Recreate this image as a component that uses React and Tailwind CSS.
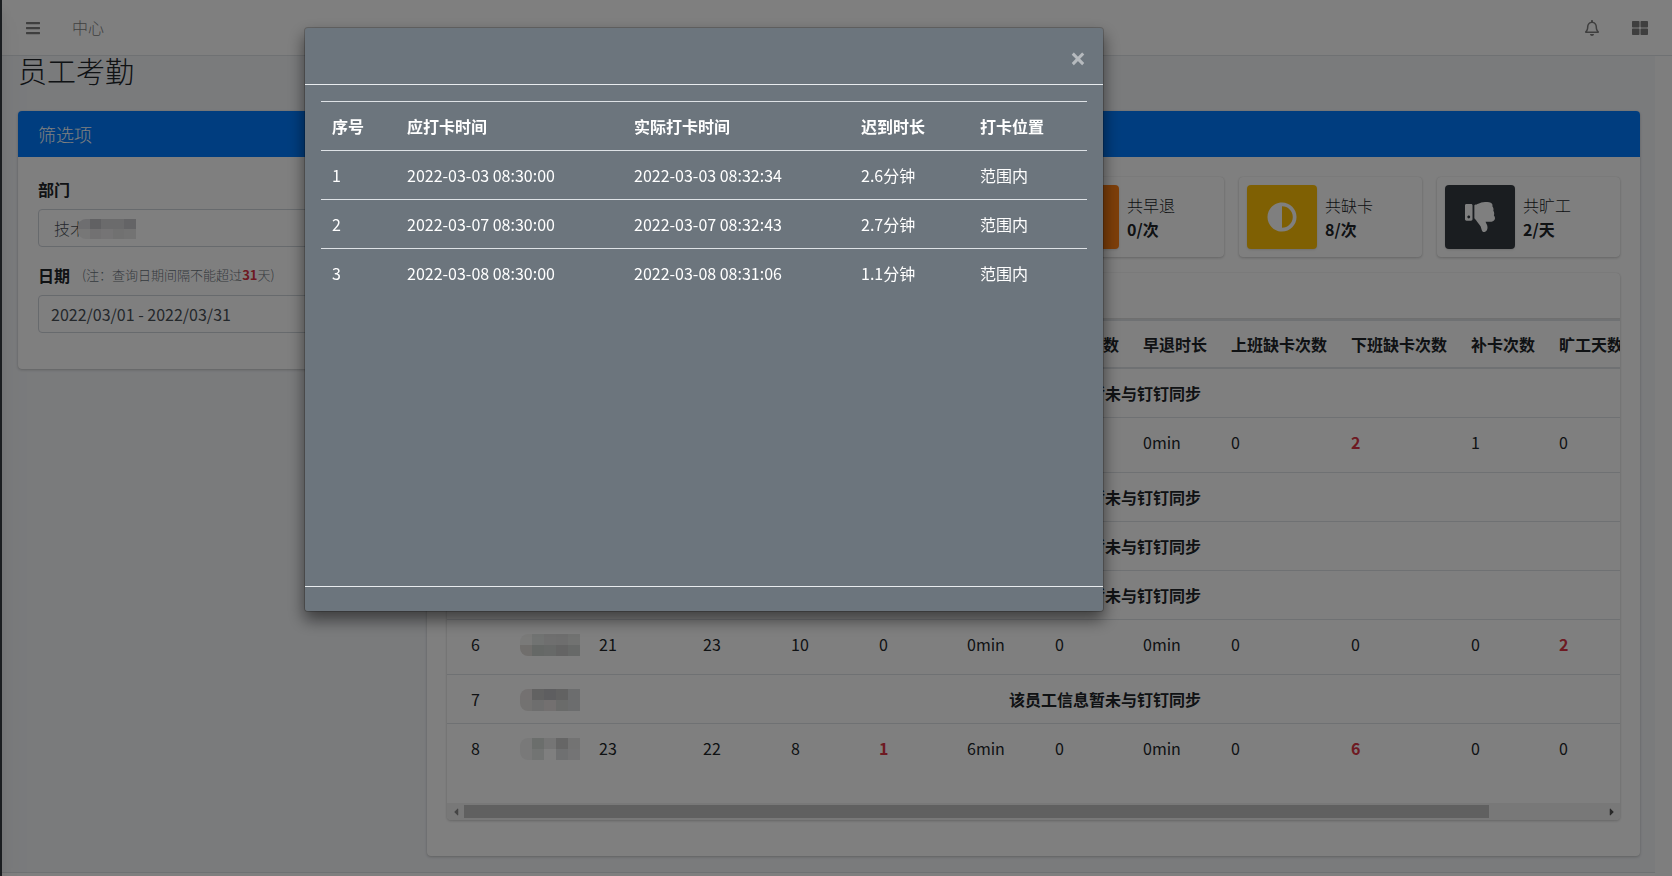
import React, { useState } from "react";
import { FaBars, FaThLarge, FaAdjust, FaThumbsDown, FaRegBell, FaCaretLeft, FaCaretRight } from "react-icons/fa";

const infoBoxes = [
  { label: "共早退", value: "0/次", color: "bg-[#fd7e14]", start: "col-start-4" },
  { label: "共缺卡", value: "8/次", color: "bg-[#ffc107]", icon: FaAdjust },
  { label: "共旷工", value: "2/天", color: "bg-[#343a40]", icon: FaThumbsDown },
];

const columns = [
  { title: "序号", width: "w-[61px]" },
  { title: "姓名", width: "w-[79px]" },
  { title: "应出勤天数", width: "w-[104px]" },
  { title: "出勤天数", width: "w-[88px]" },
  { title: "休息天数", width: "w-[88px]" },
  { title: "迟到次数", width: "w-[88px]" },
  { title: "迟到时长", width: "w-[88px]" },
  { title: "早退次数", width: "w-[88px]" },
  { title: "早退时长", width: "w-[88px]" },
  { title: "上班缺卡次数", width: "w-[120px]" },
  { title: "下班缺卡次数", width: "w-[120px]" },
  { title: "补卡次数", width: "w-[88px]" },
  { title: "旷工天数", width: "w-[88px]" },
  { title: "", width: "w-[116px]" },
];

const maskA = [
  "bg-[#f4f4f2]", "bg-[#e2e6e4]", "bg-[#dedede]", "bg-[#dcdcdc]", "bg-[#e2e4e3]",
  "bg-[#e0dcd8]", "bg-[#cad0cd]", "bg-[#ced2d0]", "bg-[#c8c8c8]", "bg-[#cfd3d1]",
];
const maskB = [
  "bg-[#e8e2e2]", "bg-[#c4c4c4]", "bg-[#bcbcc0]", "bg-[#c4c4c4]", "bg-[#d8dadd]",
  "bg-[#e6e5e2]", "bg-[#dcdddc]", "bg-[#e6e0e0]", "bg-[#d4d7d5]", "bg-[#d8dadd]",
];
const maskC = [
  "bg-[#f2f3f3]", "bg-[#d6dcd9]", "bg-[#eaeaea]", "bg-[#cdcdcd]", "bg-[#e6e6e6]",
  "bg-[#f2f3f3]", "bg-[#e4e8e6]", "bg-white", "bg-[#dfe0e3]", "bg-[#e9e9ea]",
];
const maskDept = [
  "bg-[#dddce0]", "bg-[#c2c2c6]", "bg-[#d6d6d8]", "bg-[#d6d6d8]", "bg-[#c9c9cc]",
  "bg-[#eeeeef]", "bg-[#e4e3e5]", "bg-[#eae9ea]", "bg-[#e2e2e3]", "bg-[#e6e6e6]",
];

// rows without values are employees that are not synced yet
const staff = [
  { id: 1, mask: maskB },
  { id: 2, mask: maskA, values: ["23", "23", "8", "0", "0min", "0", "0min", "0", "2", "1", "0"], red: [8] },
  { id: 3, mask: maskB },
  { id: 4, mask: maskB },
  { id: 5, mask: maskB },
  { id: 6, mask: maskA, values: ["21", "23", "10", "0", "0min", "0", "0min", "0", "0", "0", "2"], red: [10] },
  { id: 7, mask: maskB },
  { id: 8, mask: maskC, values: ["23", "22", "8", "1", "6min", "0", "0min", "0", "6", "0", "0"], red: [3, 8] },
];

const lateRecords = [
  { id: 1, plan: "2022-03-03 08:30:00", real: "2022-03-03 08:32:34", late: "2.6分钟", place: "范围内" },
  { id: 2, plan: "2022-03-07 08:30:00", real: "2022-03-07 08:32:43", late: "2.7分钟", place: "范围内" },
  { id: 3, plan: "2022-03-08 08:30:00", real: "2022-03-08 08:31:06", late: "1.1分钟", place: "范围内" },
];

const card = "rounded bg-white shadow-[0_0_1px_rgba(0,0,0,.125),0_1px_3px_rgba(0,0,0,.2)]";

function Mask({ tiles, className }) {
  return (
    <div className={`grid grid-cols-5 overflow-hidden rounded-l-lg ${className}`}>
      {tiles.map((tile, i) => <span key={i} className={tile} />)}
    </div>
  );
}

function TopBar() {
  return (
    <header className="flex h-14 items-center border-b border-[#dee2e6] bg-white pr-6 pl-[23px] text-[#7f7f7f]">
      <button type="button" aria-label="菜单">
        <FaBars size={16} />
      </button>
      <a href="#" className="ml-[31px] pb-0.5 font-light">中心</a>
      <div className="ml-auto flex items-center gap-8">
        <button type="button" aria-label="通知">
          <FaRegBell size={16} />
        </button>
        <button type="button" aria-label="应用">
          <FaThLarge size={16} />
        </button>
      </div>
    </header>
  );
}

function FilterCard() {
  return (
    <section className={`w-[394px] shrink-0 ${card}`}>
      <h3 className="flex h-[46px] items-center rounded-t bg-[#007bff] px-5 text-lg font-light text-white">筛选项</h3>
      <form className="p-5">
        <label htmlFor="dept" className="mb-2 block font-bold">部门</label>
        <div className="relative mb-4">
          <input
            id="dept"
            defaultValue="技术"
            className="h-[38px] w-full rounded border border-[#ced4da] px-[15px] font-light text-[#495057]"
          />
          <Mask tiles={maskDept} className="absolute top-2.5 left-10 h-5 w-[58px]" />
        </div>
        <div className="mb-2 flex items-center">
          <label htmlFor="range" className="font-bold">日期</label>
          <small className="ml-3 text-[13px] leading-6 font-light text-[#6c757d]">
            (注：查询日期间隔不能超过<b className="font-bold text-[#dc3545]">31</b>天)
          </small>
        </div>
        <input
          id="range"
          defaultValue="2022/03/01 - 2022/03/31"
          className="mb-4 block h-[38px] w-full rounded border border-[#ced4da] px-3 text-[#495057]"
        />
      </form>
    </section>
  );
}

function InfoBox({ box }) {
  const Icon = box.icon;
  return (
    <div className={`flex h-20 p-2 ${card} ${box.start || ""}`}>
      <div className={`flex w-[70px] items-center justify-center rounded text-white shadow ${box.color}`}>
        {Icon && <Icon size={30} />}
      </div>
      <div className="flex flex-col justify-center px-2 leading-6">
        <span className="font-light">{box.label}</span>
        <b>{box.value}</b>
      </div>
    </div>
  );
}

function StaffRow({ row }) {
  return (
    <tr className={`border-t border-[#dee2e6] align-top ${row.values ? "h-[55px]" : "h-[49px]"}`}>
      <td className="pt-3 pl-6">{row.id}</td>
      <td className="px-3 pt-3.5">
        <Mask tiles={row.mask} className="h-[22px] w-[60px]" />
      </td>
      {row.values ? (
        row.values.map((value, i) => (
          <td key={i} className={row.red.includes(i) ? "px-3 pt-3 font-bold text-[#dc3545]" : "px-3 pt-3"}>
            {value}
          </td>
        ))
      ) : (
        <td colSpan={11} className="pt-3 pr-6 pl-3 text-center font-bold">该员工信息暂未与钉钉同步</td>
      )}
    </tr>
  );
}

function AttendanceCard() {
  return (
    <section className={`min-w-0 flex-1 ${card}`}>
      <div className="h-[46px] rounded-t bg-[#007bff]" />
      <div className="px-5 pt-5 pb-9">
        <div className="grid grid-cols-6 gap-[15px]">
          {infoBoxes.map((box) => <InfoBox key={box.label} box={box} />)}
        </div>
        <div className={`mt-4 overflow-hidden ${card}`}>
          <div className="h-[46px] border-b border-[#dfdfdf]" />
          <div className="overflow-hidden pb-[25px]">
            <table className="w-[1304px] table-fixed border-collapse text-left">
              <thead>
                <tr className="h-12 border-y-2 border-[#dee2e6]">
                  {columns.map((col, i) => (
                    <th key={i} className={`whitespace-nowrap ${i === 0 ? "pl-6" : "px-3"} ${col.width}`}>
                      {col.title}
                    </th>
                  ))}
                </tr>
              </thead>
              <tbody>
                {staff.map((row) => <StaffRow key={row.id} row={row} />)}
              </tbody>
            </table>
          </div>
          <div className="flex h-[17px] items-center bg-[#f1f1f1]">
            <button type="button" aria-label="向左" className="flex w-[17px] justify-center text-[#8a8a8a]">
              <FaCaretLeft size={12} />
            </button>
            <div className="flex-1">
              <div className="h-[13px] w-9/10 bg-[#c1c1c1]" />
            </div>
            <button type="button" aria-label="向右" className="flex w-[17px] justify-center text-[#505050]">
              <FaCaretRight size={12} />
            </button>
          </div>
        </div>
      </div>
    </section>
  );
}

function LateDialog({ onClose }) {
  return (
    <div className="fixed inset-0 z-50 flex items-start justify-center bg-black/50 pt-[27px] pr-[264px]">
      <div
        role="dialog"
        aria-modal="true"
        aria-label="迟到明细"
        className="w-[800px] rounded border border-black/20 bg-[#6c757d] bg-clip-padding text-white shadow-[0_8px_16px_rgba(0,0,0,.5)]"
      >
        <div className="flex h-[57px] items-center justify-end border-b border-[#e9ecef] px-4">
          <button
            type="button"
            aria-label="关闭"
            onClick={onClose}
            className="w-[18px] pt-1 font-['Open_Sans',sans-serif] text-[28px] leading-6 font-bold opacity-50"
          >
            ×
          </button>
        </div>
        <div className="h-[501px] p-4">
          <table className="w-full table-fixed border-collapse text-left">
            <thead>
              <tr className="h-[49px] border-t border-[#dee2e6]">
                <th className="w-[74px] pr-3 pl-[11px]">序号</th>
                <th className="w-[227px] px-3">应打卡时间</th>
                <th className="w-[227px] px-3">实际打卡时间</th>
                <th className="w-[119px] px-3">迟到时长</th>
                <th className="px-3">打卡位置</th>
              </tr>
            </thead>
            <tbody>
              {lateRecords.map((item) => (
                <tr key={item.id} className="h-[49px] border-t border-[#dee2e6]">
                  <td className="pr-3 pl-[11px]">{item.id}</td>
                  <td className="px-3">{item.plan}</td>
                  <td className="px-3">{item.real}</td>
                  <td className="px-3">{item.late}</td>
                  <td className="px-3">{item.place}</td>
                </tr>
              ))}
            </tbody>
          </table>
        </div>
        <div className="h-[25px] border-t border-[#e9ecef]" />
      </div>
    </div>
  );
}

export default function App() {
  const [open, setOpen] = useState(true);

  return (
    <div className="flex h-screen overflow-hidden font-['Noto_Sans_CJK_SC',sans-serif] text-base text-[#212529]">
      <aside className="z-10 w-0.5 shrink-0 bg-[#343a40] shadow-[0_14px_28px_rgba(0,0,0,.25),0_10px_10px_rgba(0,0,0,.22)]" />
      <div className="flex min-w-0 flex-1 flex-col">
        <TopBar />
        <div className="flex min-h-0 flex-1">
          <div className="flex min-w-0 flex-1 flex-col bg-[#f4f6f9]">
            <main className="pr-[15px] pb-4 pl-4">
              <h1 className="mb-[27px] text-[29px] leading-7 font-light">员工考勤</h1>
              <div className="flex items-start gap-[15px]">
                <FilterCard />
                <AttendanceCard />
              </div>
            </main>
            <footer className="flex-1 border-t border-[#dee2e6] bg-white" />
          </div>
          <div className="w-[17px] bg-[#fdfdfd]" />
        </div>
      </div>
      {open && <LateDialog onClose={() => setOpen(false)} />}
    </div>
  );
}
